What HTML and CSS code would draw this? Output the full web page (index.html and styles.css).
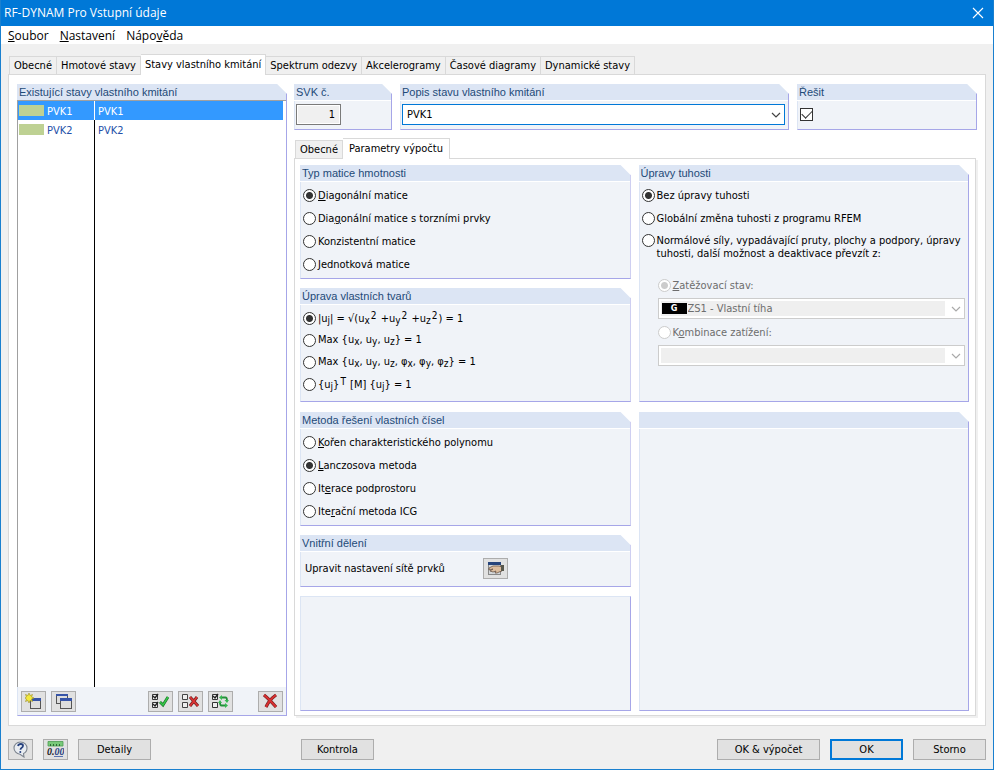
FILE: index.html
```html
<!DOCTYPE html>
<html lang="cs">
<head>
  <meta charset="UTF-8">
  <meta name="viewport" content="width=device-width, initial-scale=1.0">
  <title>RF-DYNAM Pro Vstupní údaje</title>
  <link rel="stylesheet" href="styles.css">
</head>
<body>

  <header class="titlebar">
    <h1>RF-DYNAM Pro Vstupní údaje</h1>
    <button class="close" aria-label="Zavřít">
      <svg width="12" height="12" viewBox="0 0 12 12"><path d="M1 1l10 10M11 1L1 11" stroke="#fff" stroke-width="1.1"/></svg>
    </button>
  </header>

  <nav class="menubar">
    <button><u>S</u>oubor</button>
    <button><u>N</u>astavení</button>
    <button>Nápo<u>v</u>ěda</button>
  </nav>

  <div class="tabs main-tabs" role="tablist">
    <button role="tab">Obecné</button>
    <button role="tab">Hmotové stavy</button>
    <button role="tab" class="active" aria-selected="true">Stavy vlastního kmitání</button>
    <button role="tab">Spektrum odezvy</button>
    <button role="tab">Akcelerogramy</button>
    <button role="tab">Časové diagramy</button>
    <button role="tab">Dynamické stavy</button>
  </div>

  <main class="page">
    <section class="group sidebar">
      <h2>Existující stavy vlastního kmitání</h2>
      <div class="list">
        <table>
          <tr class="selected">
            <td class="name"><span class="swatch"></span>PVK1</td>
            <td>PVK1</td>
          </tr>
          <tr>
            <td class="name"><span class="swatch"></span>PVK2</td>
            <td>PVK2</td>
          </tr>
        </table>
      </div>
      <div class="list-tools">
        <button class="icon-btn" aria-label="Nový">
          <svg width="17" height="17" viewBox="0 0 17 17">
            <rect x="5.5" y="5.5" width="10" height="10" fill="#ddd" stroke="#555"/>
            <path d="M5 5h11v3H5z" fill="#3654a8"/>
            <path d="M4 0l1 2.500 2.500-1L6.500 4 9 5 6.500 6l1 2.500L5 7.500 4 10 3 7.500.5 8.500l1-2.500L0 5l1.500-1-1-2.500L3 2.500z" fill="#f3e93c" stroke="#9a8d20" stroke-width=".6"/>
          </svg>
        </button>
        <button class="icon-btn" aria-label="Kopírovat">
          <svg width="17" height="17" viewBox="0 0 17 17">
            <rect x="1.5" y="1.5" width="11" height="9" fill="#ddd" stroke="#555"/>
            <path d="M1 1h12v2H1z" fill="#3654a8"/>
            <rect x="5.5" y="5.5" width="11" height="10" fill="#ddd" stroke="#555"/>
            <path d="M5 5h12v3H5z" fill="#3654a8"/>
          </svg>
        </button>
        <button class="icon-btn push" aria-label="Vybrat vše">
          <svg width="17" height="17" viewBox="0 0 17 17">
            <path d="M.5 1.500h5v5h-5zM.5 9.500h5v5h-5z" fill="#eee" stroke="#333"/>
            <path d="M1 3l2 2 3-4M1 11l2 2 3-4" fill="none" stroke="#222" stroke-width="1.4"/>
            <path d="M8 9l3 3 5-8" fill="none" stroke="#176b22" stroke-width="2.8"/>
            <path d="M8 9l3 3 5-8" fill="none" stroke="#35c648" stroke-width="1.6"/>
          </svg>
        </button>
        <button class="icon-btn" aria-label="Zrušit výběr">
          <svg width="17" height="17" viewBox="0 0 17 17">
            <path d="M.5 1.500h5v5h-5zM.5 9.500h5v5h-5z" fill="#eee" stroke="#444"/>
            <path d="M8 4l8 9M15 4l-7 9" stroke="#6e2020" stroke-width="3"/>
            <path d="M8 4l8 9M15 4l-7 9" stroke="#dc3434" stroke-width="1.8"/>
          </svg>
        </button>
        <button class="icon-btn" aria-label="Obrátit výběr">
          <svg width="17" height="17" viewBox="0 0 17 17">
            <path d="M.5 1.500h5v5h-5zM.5 9.500h5v5h-5z" fill="#eee" stroke="#333"/>
            <path d="M1 3l2 2 3-4" fill="none" stroke="#222" stroke-width="1.4"/>
            <path d="M9 4.500h4.500q1.500 0 1.500 3M14 12.500H9.500q-1.500 0-1.500-3" fill="none" stroke="#24913a" stroke-width="1.8"/>
            <path d="M12.500 7h4.500l-2 3zM6 10h4L8 7zM7 4.500l3-2.500v5zM16 12.500l-3-2.500v5z" fill="#35b850"/>
          </svg>
        </button>
        <button class="icon-btn delete" aria-label="Smazat">
          <svg width="17" height="17" viewBox="0 0 17 17">
            <path d="M2 2q5 4 12 12M14 2Q7 7 4 14" fill="none" stroke="#742020" stroke-width="3.2"/>
            <path d="M2 2q5 4 12 12M14 2Q7 7 4 14" fill="none" stroke="#d93030" stroke-width="2"/>
          </svg>
        </button>
      </div>
    </section>

    <div class="detail">
      <div class="case-row">
        <section class="group">
          <h2><label for="svk">SVK č.</label></h2>
          <div class="field"><input id="svk" class="number" type="text" value="1" readonly></div>
        </section>
        <section class="group">
          <h2><label for="popis">Popis stavu vlastního kmitání</label></h2>
          <div class="field">
            <div class="combo focused">
              <select id="popis"><option>PVK1</option><option>PVK2</option></select>
              <svg class="chevron" width="10" height="6" viewBox="0 0 10 6"><path d="M1 1l4 4 4-4" fill="none" stroke="#444" stroke-width="1.2"/></svg>
            </div>
          </div>
        </section>
        <section class="group">
          <h2><label for="resit">Řešit</label></h2>
          <div class="field"><input id="resit" type="checkbox" checked></div>
        </section>
      </div>

      <div class="tabs" role="tablist">
        <button role="tab">Obecné</button>
        <button role="tab" class="active" aria-selected="true">Parametry výpočtu</button>
      </div>

      <div class="params">
        <div class="stack">
          <section class="group">
            <h2>Typ matice hmotnosti</h2>
            <div class="options">
              <label><input type="radio" name="matice" checked><span><u>D</u>iagonální matice</span></label>
              <label><input type="radio" name="matice"><span>Dia<u>g</u>onální matice s torzními prvky</span></label>
              <label><input type="radio" name="matice"><span>Konzistentní matice</span></label>
              <label><input type="radio" name="matice"><span><u>J</u>ednotková matice</span></label>
            </div>
          </section>
          <section class="group">
            <h2>Úprava vlastních tvarů</h2>
            <div class="options formulas">
              <label><input type="radio" name="tvary" checked><span>|u<sub>j</sub>| = √(u<sub>x</sub><sup>2</sup> +u<sub>y</sub><sup>2</sup> +u<sub>z</sub><sup>2</sup>) = 1</span></label>
              <label><input type="radio" name="tvary"><span>Max {u<sub>x</sub>, u<sub>y</sub>, u<sub>z</sub>} = 1</span></label>
              <label><input type="radio" name="tvary"><span>Max {u<sub>x</sub>, u<sub>y</sub>, u<sub>z</sub>, φ<sub>x</sub>, φ<sub>y</sub>, φ<sub>z</sub>} = 1</span></label>
              <label><input type="radio" name="tvary"><span>{u<sub>j</sub>}<sup>T</sup> [M] {u<sub>j</sub>} = 1</span></label>
            </div>
          </section>
        </div>

        <section class="group">
          <h2>Úpravy tuhosti</h2>
          <div class="options">
            <label><input type="radio" name="tuhost" checked><span>Bez úpravy tuhosti</span></label>
            <label><input type="radio" name="tuhost"><span>Globální změna tuhosti z programu RFEM</span></label>
            <label class="multiline"><input type="radio" name="tuhost"><span>Normálové síly, vypadávající pruty, plochy a podpory, úpravy tuhosti, další možnost a deaktivace převzít z:</span></label>
          </div>
          <div class="sub-options">
            <label class="disabled"><input type="radio" name="zdroj" checked disabled><span><u>Z</u>atěžovací stav:</span></label>
            <div class="combo off">
              <span class="badge">G</span>
              <select class="with-badge" aria-label="Zatěžovací stav" disabled><option>ZS1 - Vlastní tíha</option></select>
              <svg class="chevron" width="10" height="6" viewBox="0 0 10 6"><path d="M1 1l4 4 4-4" fill="none" stroke="#aaa" stroke-width="1.2"/></svg>
            </div>
            <label class="disabled"><input type="radio" name="zdroj" disabled><span>K<u>o</u>mbinace zatížení:</span></label>
            <div class="combo off">
              <select aria-label="Kombinace zatížení" disabled><option></option></select>
              <svg class="chevron" width="10" height="6" viewBox="0 0 10 6"><path d="M1 1l4 4 4-4" fill="none" stroke="#aaa" stroke-width="1.2"/></svg>
            </div>
          </div>
        </section>

        <div class="stack">
          <section class="group">
            <h2>Metoda řešení vlastních čísel</h2>
            <div class="options">
              <label><input type="radio" name="metoda"><span><u>K</u>ořen charakteristického polynomu</span></label>
              <label><input type="radio" name="metoda" checked><span><u>L</u>anczosova metoda</span></label>
              <label><input type="radio" name="metoda"><span>It<u>e</u>race podprostoru</span></label>
              <label><input type="radio" name="metoda"><span>Ite<u>r</u>ační metoda ICG</span></label>
            </div>
          </section>
          <section class="group">
            <h2>Vnitřní dělení</h2>
            <div class="mesh">
              <span>Upravit nastavení sítě prvků</span>
              <button class="icon-btn" aria-label="Nastavení sítě prvků">
                <svg width="17" height="17" viewBox="0 0 17 17">
                  <rect x="1.5" y="2.5" width="12" height="12" fill="#d4d7da" stroke="#888"/>
                  <path d="M1 2h13v3H1z" fill="#26447c"/>
                  <path d="M2 8l4-2h6l3 1v4l-3 1-2 1H8l1-2-3 1-3-1 3-2-4 1z" fill="#dcbd9f" stroke="#5b4638" stroke-width=".7"/>
                  <path d="M14 5h3v6h-3z" fill="#57574b"/>
                </svg>
              </button>
            </div>
          </section>
          <section class="group blank"></section>
        </div>

        <section class="group">
          <h2></h2>
        </section>
      </div>
    </div>
  </main>

  <footer class="actions">
    <div class="left-actions">
      <button class="icon-btn" aria-label="Nápověda">
        <svg width="17" height="17" viewBox="0 0 17 17">
          <path d="M8.500 1C4.500 1 2 3.800 2 7s2.500 6 6 6.200l4 2.800-.5-3.500C14 11.500 15 9.500 15 7c0-3.200-2.500-6-6.500-6z" fill="#e9edf2" stroke="#7d858f" stroke-width="1.1"/>
          <path d="M6 5Q6.500 3 8.800 3q2.200 0 2.200 1.800 0 1.300-1.300 2Q8.500 7.500 8.500 8.800" fill="none" stroke="#27427f" stroke-width="1.8"/>
          <circle cx="8.300" cy="11" r="1" fill="#27427f"/>
        </svg>
      </button>
      <button class="icon-btn" aria-label="Jednotky a desetinná místa">
        <svg width="17" height="17" viewBox="0 0 17 17">
          <path d="M1 .5h15v4.500H1z" fill="#79c979" stroke="#4d9c52" stroke-width=".8"/>
          <path d="M3.500 3v2M6.500 3v2M9.500 3v2M12.500 3v2" stroke="#2c6b33"/>
          <path d="M7 15h9v1H7z" fill="#5b74b0"/>
          <text x="0" y="14" font-family="Liberation Serif, serif" font-size="10" font-style="italic" font-weight="bold" fill="#222">0.<tspan fill="#27427f">00</tspan></text>
        </svg>
      </button>
      <button class="btn">Detaily</button>
    </div>
    <button class="btn">Kontrola</button>
    <div class="right-actions">
      <button class="btn wide">OK &amp; výpočet</button>
      <button class="btn default">OK</button>
      <button class="btn">Storno</button>
    </div>
  </footer>

</body>
</html>
```

FILE: styles.css
```css
* {
  box-sizing: border-box;
}

body {
  margin: 0;
  min-height: 100vh;
  display: flex;
  flex-direction: column;
  background: #f0f0f0;
  border: 1px solid #1a80cf;
  border-top: none;
  font-family: Tahoma, "DejaVu Sans Condensed", sans-serif;
  font-size: 11px;
  line-height: 13px;
  color: #000;
}

button, input, select {
  font: inherit;
  color: inherit;
  margin: 0;
}

/* title and menu */
.titlebar {
  display: flex;
  justify-content: space-between;
  align-items: center;
  height: 26px;
  padding: 0 9px 0 3px;
  background: #0078d7;
  color: #fff;
}

.titlebar h1 {
  margin: 0;
  font: 12px/16px "Segoe UI", "Open Sans", sans-serif;
}

.close {
  display: flex;
  padding: 0;
  border: none;
  background: none;
}

.menubar {
  display: flex;
  gap: 11px;
  height: 18px;
  padding: 0 7px;
  background: #fff;
}

.menubar button {
  padding: 0;
  border: none;
  background: none;
  font: 12px/20px "Segoe UI", "Open Sans", sans-serif;
}

/* tabs */
.tabs {
  display: flex;
  align-items: flex-end;
  height: 20px;
  padding-left: 1px;
}

.tabs button {
  height: 18px;
  padding: 0 4px;
  border: 1px solid #d9d9d9;
  border-bottom: none;
  background: #f0f0f0;
  white-space: nowrap;
}

.tabs button + button {
  border-left: none;
}

.tabs .active {
  height: 21px;
  margin-bottom: -1px;
  padding: 0 6px 2px;
  background: #fff;
  position: relative;
}

.main-tabs {
  margin: 10px 7px 0;
}

.main-tabs .active {
  padding: 0 4px 2px;
}

/* page */
.page {
  flex: 1;
  display: grid;
  grid-template-columns: 270px 1fr;
  gap: 7px;
  margin: 0 7px;
  padding: 9px 8px;
  border: 1px solid #d9d9d9;
  background: #fff;
}

.group {
  background: #f0f3f8;
  border: 1px solid #a6a6e8;
  border-top: none;
  border-left-color: #dce5f4;
  clip-path: polygon(0 0, calc(100% - 10px) 0, 100% 10px, 100% 100%, 0 100%);
}

.group h2 {
  height: 17px;
  margin: 0 0 0 -1px;
  padding: 1px 2px 0;
  border-bottom: 1px solid #fff;
  background: #dce5f4;
  color: #1e4a78;
  font: 11px/15px "Liberation Sans", Arial, sans-serif;
}

.group.blank {
  flex: 1;
  border-top: 1px solid #dce5f4;
  clip-path: none;
}

.sidebar {
  display: flex;
  flex-direction: column;
}

.sidebar h2 {
  border-bottom-color: #a0a0a0;
}

.list {
  flex: 1;
  padding-right: 3px;
  border-left: 1px solid #a0a0a0;
  margin-left: -1px;
  background: linear-gradient(#000, #000) 76px 0 / 1px 100% no-repeat #fff;
}

.list table {
  width: 100%;
  border-spacing: 0;
  table-layout: fixed;
  color: #2450a8;
}

.list td {
  height: 19px;
  padding: 2px 3px 0;
}

.list .name {
  width: 77px;
  padding: 2px 1px 0;
  border-right: 1px solid #000;
}

.list .selected {
  background: #3399ff;
  color: #fff;
}

.list .selected .name {
  border-right-color: #fff;
}

.swatch {
  display: inline-block;
  width: 25px;
  height: 11px;
  margin-right: 3px;
  background: #bed193;
  vertical-align: -1px;
}

.list-tools {
  display: flex;
  gap: 5px;
  padding: 4px 3px 3px;
}

.push {
  margin-left: auto;
}

.delete {
  margin-left: 20px;
}

/* detail */
.detail {
  display: flex;
  flex-direction: column;
}

.case-row {
  display: grid;
  grid-template-columns: 98px 389fr 180fr;
  gap: 8px;
  margin-bottom: 8px;
}

.field {
  display: flex;
  align-items: center;
  height: 28px;
  padding: 0 3px 2px 1px;
}

.number {
  width: 45px;
  height: 21px;
  padding: 0 5px;
  border: 1px solid #7a7a7a;
  background: #f0f0f0;
  box-shadow: inset 0 0 0 1px #fff;
  text-align: right;
}

.combo {
  position: relative;
  flex: 1;
}

.combo select {
  display: block;
  width: 100%;
  height: 21px;
  padding: 0 20px 0 4px;
  border: 1px solid #ccc;
  border-radius: 0;
  background: #fff;
  appearance: none;
}

.combo.focused select {
  border-color: #0078d7;
}

.combo.off select {
  background: linear-gradient(#efefef, #efefef) 2px 2px / calc(100% - 21px) calc(100% - 4px) no-repeat #fff;
  color: #6d6d6d;
  opacity: 1;
}

.combo .with-badge {
  padding-left: 29px;
}

.badge {
  position: absolute;
  left: 4px;
  top: 5px;
  width: 25px;
  background: #000;
  color: #fff;
  font-size: 9px;
  font-weight: bold;
  line-height: 11px;
  text-align: center;
}

.chevron {
  position: absolute;
  right: 4px;
  top: 8px;
  pointer-events: none;
}

.params {
  flex: 1;
  display: grid;
  grid-template-columns: 1fr 1fr;
  grid-template-rows: auto 1fr;
  gap: 10px 8px;
  margin-right: 1px;
  padding: 6px 6px 4px 5px;
  border: 1px solid #d9d9d9;
  box-shadow: 2px 2px 0 #f0f0f0;
}

.stack {
  display: flex;
  flex-direction: column;
  gap: 9px;
}

.options {
  padding: 2px;
}

.options label {
  display: flex;
  align-items: center;
  gap: 2px;
  height: 23px;
}

.formulas {
  padding-bottom: 6px;
}

.formulas label {
  height: 22px;
}

.options .multiline {
  align-items: flex-start;
  height: 40px;
  padding-top: 4px;
}

.sub-options {
  padding: 0 3px 0 18px;
}

.sub-options label {
  display: flex;
  align-items: center;
  gap: 2px;
  height: 26px;
}

.disabled {
  color: #6d6d6d;
}

sub, sup {
  font-size: 10px;
  line-height: 1;
}

sub {
  vertical-align: -2px;
}

sup {
  margin: 0 1px;
  vertical-align: 3px;
}

input[type="radio"] {
  flex: none;
  width: 13px;
  height: 13px;
  border: 1px solid #333;
  border-radius: 50%;
  background: #fff;
  appearance: none;
}

input[type="radio"]:checked {
  background: radial-gradient(circle, #333 3px, #fff 4px);
}

input[type="radio"]:disabled {
  border-color: #ccc;
}

input[type="radio"]:disabled:checked {
  background: radial-gradient(circle, #ccc 3px, #fff 4px);
}

input[type="checkbox"] {
  width: 13px;
  height: 13px;
  margin-left: 1px;
  border: 1px solid #333;
  background: #fff;
  appearance: none;
  display: grid;
  place-items: center;
}

input[type="checkbox"]:checked::before {
  content: "";
  width: 9px;
  height: 5px;
  margin-bottom: 3px;
  border: solid #333;
  border-width: 0 0 1px 1px;
  transform: rotate(-45deg);
}

.mesh {
  display: flex;
  align-items: center;
  height: 34px;
  padding: 0 4px 2px;
}

.mesh span {
  width: 178px;
}

/* buttons */
.icon-btn, .btn {
  height: 21px;
  border: 1px solid #adadad;
  background: #e1e1e1;
}

.icon-btn {
  display: flex;
  align-items: center;
  justify-content: center;
  width: 25px;
  padding: 0;
}

.btn {
  width: 73px;
  padding: 0;
}

.btn.wide {
  width: 103px;
}

.btn.default {
  border: 2px solid #0078d7;
}

.actions {
  display: flex;
  padding: 13px 7px 9px;
}

.left-actions {
  display: flex;
  gap: 10px;
  width: 293px;
}

.right-actions {
  display: flex;
  gap: 10px;
  margin-left: auto;
}
```
